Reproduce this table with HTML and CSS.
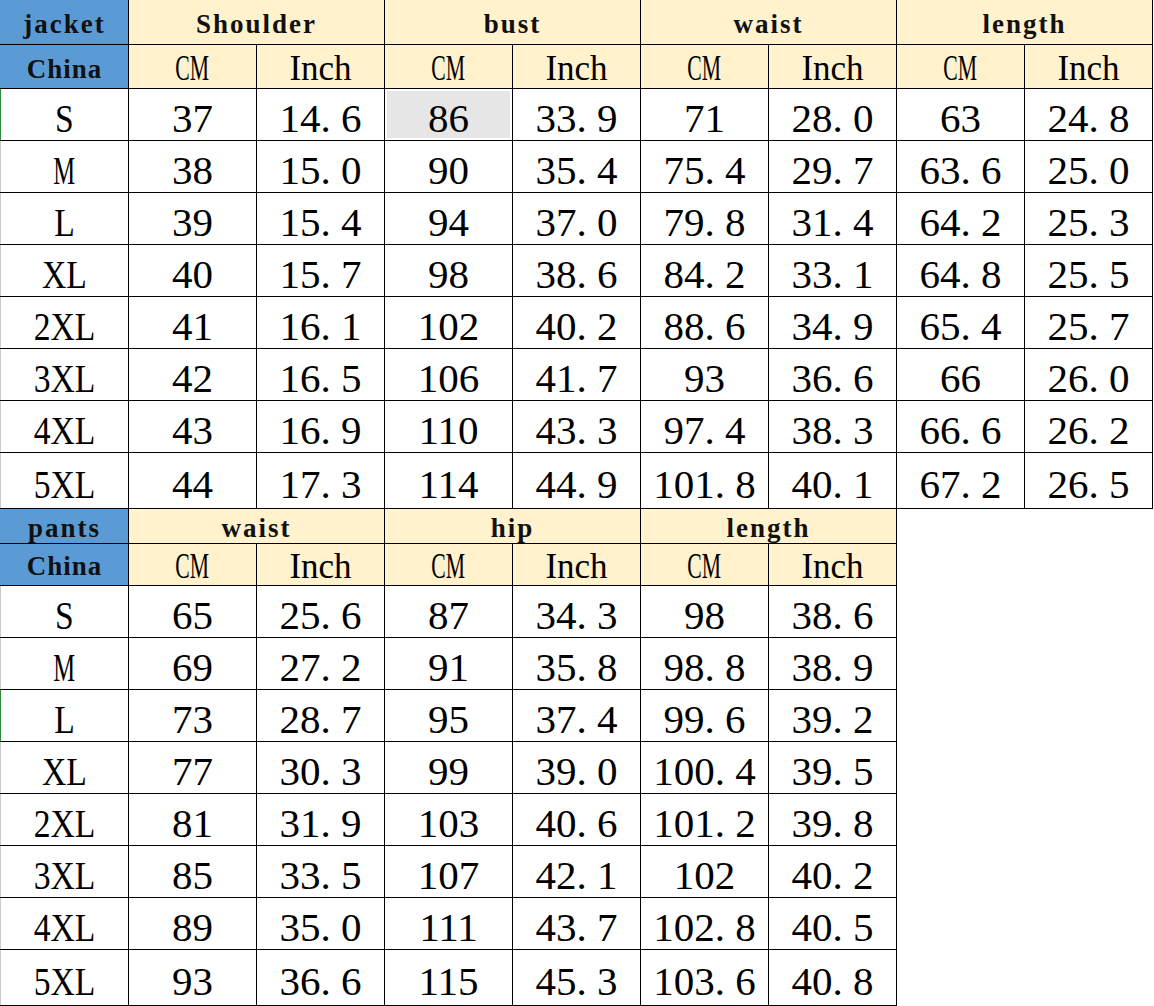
FILE: index.html
```html
<!DOCTYPE html>
<html lang="en">
<head>
<meta charset="utf-8">
<title>Size chart</title>
<link rel="stylesheet" href="styles.css">
</head>
<body>
<table class="chart jacket">
  <colgroup><col><col><col><col><col><col><col><col><col></colgroup>
  <tr class="r-title">
    <th class="corner">jacket</th>
    <th class="group" colspan="2">Shoulder</th>
    <th class="group" colspan="2">bust</th>
    <th class="group" colspan="2">waist</th>
    <th class="group" colspan="2">length</th>
  </tr>
  <tr class="r-unit">
    <th class="corner">China</th>
    <th class="unit"><span class="cm">CM</span></th><th class="unit">Inch</th>
    <th class="unit"><span class="cm">CM</span></th><th class="unit">Inch</th>
    <th class="unit"><span class="cm">CM</span></th><th class="unit">Inch</th>
    <th class="unit"><span class="cm">CM</span></th><th class="unit">Inch</th>
  </tr>
  <tr><td class="lbl mark"><span class="cond">S</span></td><td>37</td><td>14<span class="pt">.</span>6</td><td class="sel">86</td><td>33<span class="pt">.</span>9</td><td>71</td><td>28<span class="pt">.</span>0</td><td>63</td><td>24<span class="pt">.</span>8</td></tr>
  <tr><td class="lbl"><span class="cond cond-m">M</span></td><td>38</td><td>15<span class="pt">.</span>0</td><td>90</td><td>35<span class="pt">.</span>4</td><td>75<span class="pt">.</span>4</td><td>29<span class="pt">.</span>7</td><td>63<span class="pt">.</span>6</td><td>25<span class="pt">.</span>0</td></tr>
  <tr><td class="lbl"><span class="cond">L</span></td><td>39</td><td>15<span class="pt">.</span>4</td><td>94</td><td>37<span class="pt">.</span>0</td><td>79<span class="pt">.</span>8</td><td>31<span class="pt">.</span>4</td><td>64<span class="pt">.</span>2</td><td>25<span class="pt">.</span>3</td></tr>
  <tr><td class="lbl"><span class="cond">XL</span></td><td>40</td><td>15<span class="pt">.</span>7</td><td>98</td><td>38<span class="pt">.</span>6</td><td>84<span class="pt">.</span>2</td><td>33<span class="pt">.</span>1</td><td>64<span class="pt">.</span>8</td><td>25<span class="pt">.</span>5</td></tr>
  <tr><td class="lbl"><span class="cond">2XL</span></td><td>41</td><td>16<span class="pt">.</span>1</td><td>102</td><td>40<span class="pt">.</span>2</td><td>88<span class="pt">.</span>6</td><td>34<span class="pt">.</span>9</td><td>65<span class="pt">.</span>4</td><td>25<span class="pt">.</span>7</td></tr>
  <tr><td class="lbl"><span class="cond">3XL</span></td><td>42</td><td>16<span class="pt">.</span>5</td><td>106</td><td>41<span class="pt">.</span>7</td><td>93</td><td>36<span class="pt">.</span>6</td><td>66</td><td>26<span class="pt">.</span>0</td></tr>
  <tr><td class="lbl"><span class="cond">4XL</span></td><td>43</td><td>16<span class="pt">.</span>9</td><td>110</td><td>43<span class="pt">.</span>3</td><td>97<span class="pt">.</span>4</td><td>38<span class="pt">.</span>3</td><td>66<span class="pt">.</span>6</td><td>26<span class="pt">.</span>2</td></tr>
  <tr class="r-last"><td class="lbl"><span class="cond">5XL</span></td><td>44</td><td>17<span class="pt">.</span>3</td><td>114</td><td>44<span class="pt">.</span>9</td><td>101<span class="pt">.</span>8</td><td>40<span class="pt">.</span>1</td><td>67<span class="pt">.</span>2</td><td>26<span class="pt">.</span>5</td></tr>
</table>
<table class="chart pants">
  <colgroup><col><col><col><col><col><col><col></colgroup>
  <tr class="r-title r-title-sm">
    <th class="corner">pants</th>
    <th class="group" colspan="2">waist</th>
    <th class="group" colspan="2">hip</th>
    <th class="group" colspan="2">length</th>
  </tr>
  <tr class="r-unit r-unit-sm">
    <th class="corner">China</th>
    <th class="unit"><span class="cm">CM</span></th><th class="unit">Inch</th>
    <th class="unit"><span class="cm">CM</span></th><th class="unit">Inch</th>
    <th class="unit"><span class="cm">CM</span></th><th class="unit">Inch</th>
  </tr>
  <tr><td class="lbl"><span class="cond">S</span></td><td>65</td><td>25<span class="pt">.</span>6</td><td>87</td><td>34<span class="pt">.</span>3</td><td>98</td><td>38<span class="pt">.</span>6</td></tr>
  <tr><td class="lbl"><span class="cond cond-m">M</span></td><td>69</td><td>27<span class="pt">.</span>2</td><td>91</td><td>35<span class="pt">.</span>8</td><td>98<span class="pt">.</span>8</td><td>38<span class="pt">.</span>9</td></tr>
  <tr><td class="lbl mark"><span class="cond">L</span></td><td>73</td><td>28<span class="pt">.</span>7</td><td>95</td><td>37<span class="pt">.</span>4</td><td>99<span class="pt">.</span>6</td><td>39<span class="pt">.</span>2</td></tr>
  <tr><td class="lbl"><span class="cond">XL</span></td><td>77</td><td>30<span class="pt">.</span>3</td><td>99</td><td>39<span class="pt">.</span>0</td><td>100<span class="pt">.</span>4</td><td>39<span class="pt">.</span>5</td></tr>
  <tr><td class="lbl"><span class="cond">2XL</span></td><td>81</td><td>31<span class="pt">.</span>9</td><td>103</td><td>40<span class="pt">.</span>6</td><td>101<span class="pt">.</span>2</td><td>39<span class="pt">.</span>8</td></tr>
  <tr><td class="lbl"><span class="cond">3XL</span></td><td>85</td><td>33<span class="pt">.</span>5</td><td>107</td><td>42<span class="pt">.</span>1</td><td>102</td><td>40<span class="pt">.</span>2</td></tr>
  <tr><td class="lbl"><span class="cond">4XL</span></td><td>89</td><td>35<span class="pt">.</span>0</td><td>111</td><td>43<span class="pt">.</span>7</td><td>102<span class="pt">.</span>8</td><td>40<span class="pt">.</span>5</td></tr>
  <tr class="r-last"><td class="lbl"><span class="cond">5XL</span></td><td>93</td><td>36<span class="pt">.</span>6</td><td>115</td><td>45<span class="pt">.</span>3</td><td>103<span class="pt">.</span>6</td><td>40<span class="pt">.</span>8</td></tr>
</table>
</body>
</html>
```

FILE: styles.css
```css
html, body {
  margin: 0;
  padding: 0;
  background: #ffffff;
}

.chart {
  border-collapse: collapse;
  table-layout: fixed;
  font-family: "Liberation Serif", "Times New Roman", serif;
  color: #000;
}

.jacket { width: 1153px; }
.pants { width: 897px; margin-top: -1px; }

.chart col { width: 128px; }

.chart th,
.chart td {
  border: 1px solid #000;
  padding: 0;
  text-align: center;
  white-space: nowrap;
  overflow: hidden;
}

.chart tr { height: 52px; }
.chart tr.r-last { height: 56px; }

/* header rows */
.chart tr.r-title { height: 44px; }
.chart tr.r-unit { height: 44px; }
.chart tr.r-title-sm { height: 35px; }
.chart tr.r-unit-sm { height: 42px; }

.chart td {
  font-size: 41px;
  line-height: 1;
  vertical-align: middle;
  padding-top: 8px;
}

.pt { padding-right: 0.25em; }

.cond {
  display: inline-block;
  transform: scaleX(0.82);
}
.cond-m { transform: scaleX(0.6); }

.chart td.lbl { border-left-color: #c9c9c9; }
.chart td.mark { border-left: 1px solid #2e8b3a; }

.chart td.sel {
  background: #e6e6e6;
  box-shadow: inset 0 0 0 2px #fff;
}

.jacket .r-title th { border-top: 0; }

.chart th {
  background: #fff2cc;
  font-weight: normal;
  vertical-align: bottom;
}

.chart th.corner {
  background: #5b9bd5;
  border-left-color: #5b9bd5;
}

.chart th.corner,
.chart th.group {
  font-family: "Liberation Serif", "Times New Roman", serif;
  font-weight: bold;
  font-size: 27px;
  letter-spacing: 2px;
  line-height: 1;
  padding-bottom: 6px;
  color: #111;
}

.chart .r-unit th.corner {
  letter-spacing: 1px;
  padding-bottom: 5px;
}

.chart th.unit {
  font-size: 35px;
  line-height: 1;
  padding-bottom: 2px;
}

.cm {
  display: inline-block;
  transform: scaleX(0.62);
}

.chart .r-title-sm th.corner,
.chart .r-title-sm th.group {
  padding-bottom: 1px;
}
.chart .r-unit-sm th.corner { padding-bottom: 5px; }
.chart .r-unit-sm th.unit { padding-bottom: 1px; }
```
